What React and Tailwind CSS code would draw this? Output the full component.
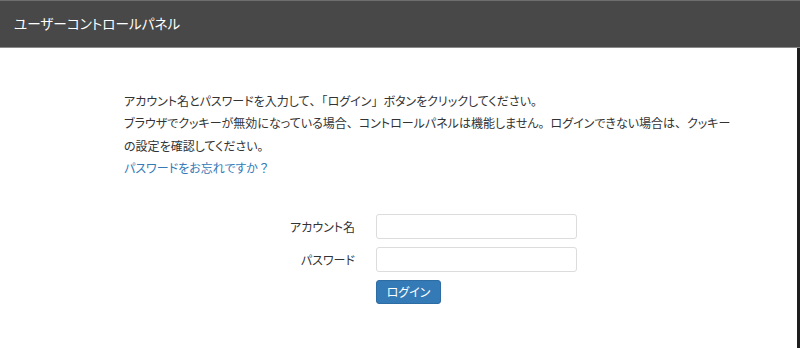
const PUNCT = /([、。「」？])/;

// Proportional kana like the original font, but full-width punctuation
function Jp({ children }) {
  return children.split(PUNCT).map((part, i) =>
    PUNCT.test(part) ? (
      <span key={i} className="[font-feature-settings:normal]">{part}</span>
    ) : (
      part
    )
  );
}

export default function App() {
  return (
    <div className="w-[800px] h-[348px] bg-white text-[#333] font-['Noto_Sans_CJK_JP','Noto_Sans',sans-serif] [font-feature-settings:'palt'] overflow-hidden flex flex-col">
      <header className="h-[48px] shrink-0 bg-[#484848] border-t border-t-[#6e6e6e] border-b border-b-[#8a8a8a] flex items-center px-[14px]">
        <h1 className="text-white text-[13.6px] font-normal leading-none">ユーザーコントロールパネル</h1>
      </header>

      <main className="flex-1 border-r-[3px] border-r-[#1e1e1e]">
        <div className="ml-[124px] mt-[42px] w-[614px] text-[12px] leading-[22.3px]">
          <p><Jp>アカウント名とパスワードを入力して、「ログイン」ボタンをクリックしてください。</Jp></p>
          <p><Jp>ブラウザでクッキーが無効になっている場合、コントロールパネルは機能しません。ログインできない場合は、クッキーの設定を確認してください。</Jp></p>
          <a href="#" className="text-[#337ab7]"><Jp>パスワードをお忘れですか？</Jp></a>
        </div>

        <form className="mt-[35px] pl-[255px] flex flex-col gap-[8px] text-[12px]">
          <div className="flex items-center gap-[21px]">
            <label className="w-[100px] text-right">アカウント名</label>
            <input className="w-[201px] h-[25px] border border-[#dcdcdc] rounded-[3px] px-2 outline-none" />
          </div>
          <div className="flex items-center gap-[21px]">
            <label className="w-[100px] text-right">パスワード</label>
            <input type="password" className="w-[201px] h-[25px] border border-[#dcdcdc] rounded-[3px] px-2 outline-none" />
          </div>
          <div className="flex gap-[21px]">
            <div className="w-[100px]" />
            <button type="button" className="w-[65px] h-[24px] bg-[#337ab7] border border-[#2e6da4] rounded-[3px] text-white text-[12px] leading-none">
              ログイン
            </button>
          </div>
        </form>
      </main>
    </div>
  );
}
